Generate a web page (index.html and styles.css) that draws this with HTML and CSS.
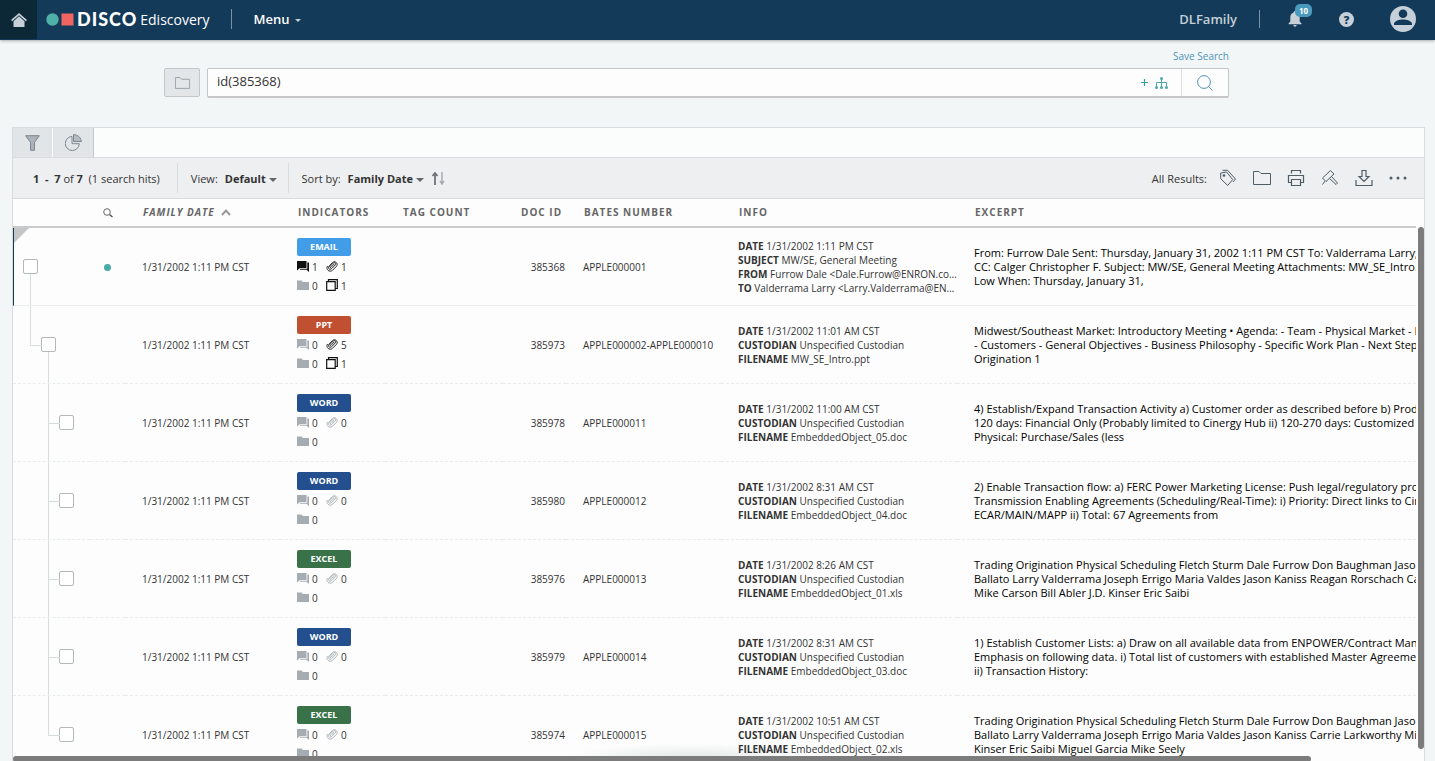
FILE: index.html
```html
<!DOCTYPE html>
<html lang="en">
<head>
    <meta charset="UTF-8">
    <meta name="viewport" content="width=device-width, initial-scale=1.0">
    <title>DISCO Ediscovery</title>
    <link rel="stylesheet" href="styles.css">
</head>
<body>
    <!-- Shared icons -->
    <svg class="sprite" aria-hidden="true">
        <symbol id="i-folder" viewBox="0 0 18 16"><path d="M.500 14.500V1.500H6L8 3.500H17.500V14.500Z" fill="none" stroke="currentColor"/></symbol>
        <symbol id="i-chat" viewBox="0 0 12 12"><path d="M0 1H9.500V8H3L0 10.500Z"/><path d="M10.300 2.500H12V12L9.500 9.800H3V8.700H10.300Z"/></symbol>
        <symbol id="i-clip" viewBox="0 0 12 12"><path d="M8.300 4L5 7.300C4.200 8.100 3.300 7.200 4 6.400L7.300 3C8.800 1.600 10.600 3.500 9.200 5L5.800 8.500C3.600 10.500 1.300 8.200 3.200 6L6.500 2.500C9 .200 12.800 3.600 10.500 6.300L6.500 10.300C3.500 12.800 -.500 9.500 1.300 6.300" fill="none" stroke="currentColor" stroke-width=".9" stroke-linecap="round"/></symbol>
        <symbol id="i-dir" viewBox="0 0 12 12"><path d="M0 1.500H4.500L6 3H12V11H0Z"/></symbol>
        <symbol id="i-copy" viewBox="0 0 12 12"><path d="M.700 2.700H9.200V11.300H.700Z M2.500 2.500V.700H11.300V9.500H9.500" fill="none" stroke="currentColor" stroke-width="1.200"/></symbol>
    </svg>

    <header class="topbar">
        <a class="home" href="#" aria-label="Home">
            <svg width="16" height="14" viewBox="0 0 16 14"><path d="M8 0L16 7L14.800 8.200L8 2.200L1.200 8.200L0 7Z"/><path d="M8 3.300L13.500 8.200V14H2.500V8.200Z"/></svg>
        </a>
        <a class="brand" href="#">
            <svg width="28" height="13" viewBox="0 0 28 13"><circle cx="6.500" cy="6.500" r="6.200" fill="#4fb0a8"/><rect x="15.500" y=".500" width="12" height="12" fill="#f0655f"/></svg>
            <strong>DISCO</strong>
            <span>Ediscovery</span>
        </a>
        <button class="menu-btn" type="button">Menu <i class="caret"></i></button>
        <div class="account">
            <span class="account-name">DLFamily</span>
            <button class="bell" type="button" aria-label="Notifications">
                <svg width="14" height="16" viewBox="0 0 14 16"><path d="M7 0C7.800 0 8.300 .600 8.300 1.400C10.600 2 11.700 4 11.700 6.300V10.500L13.500 12.500V13.300H.500V12.500L2.300 10.500V6.300C2.300 4 3.400 2 5.700 1.400C5.700 .600 6.200 0 7 0ZM5.400 14H8.600C8.600 16.300 5.400 16.300 5.400 14Z"/></svg>
                <span class="badge">10</span>
            </button>
            <button class="help" type="button" aria-label="Help">?</button>
            <button class="avatar" type="button" aria-label="Profile">
                <svg width="26" height="26" viewBox="0 0 26 26"><circle cx="13" cy="13" r="13"/><circle cx="13" cy="7.800" r="4.300" fill="#143a5a"/><path d="M4 19V17.800C4 15 9.500 13.500 13 13.500S22 15 22 17.800V19Z" fill="#143a5a"/></svg>
            </button>
        </div>
    </header>

    <form class="search">
        <a class="save" href="#">Save Search</a>
        <div class="search-row">
            <button class="folder-btn" type="button" aria-label="Folders"><svg width="15" height="14"><use href="#i-folder"/></svg></button>
            <div class="search-box">
                <input type="text" value="id(385368)" aria-label="Search">
                <button class="tool" type="button" aria-label="Search builder">
                    <svg width="27" height="12" viewBox="0 0 27 12"><path d="M0 5.500H7M3.500 2V9" fill="none" stroke="#3a9f9f" stroke-width="1.200"/><path d="M20.500 2V10M15.500 10V5.500H25.500V10" fill="none" stroke="#4aa9a9"/><g fill="#4aa9a9"><circle cx="20.500" cy="1.500" r="1.500"/><circle cx="15.500" cy="10.500" r="1.500"/><circle cx="20.500" cy="10.500" r="1.500"/><circle cx="25.500" cy="10.500" r="1.500"/></g></svg>
                </button>
                <button class="go" type="submit" aria-label="Run search">
                    <svg width="16" height="16" viewBox="0 0 16 16"><path d="M11.700 11.700L15.500 15.500" stroke="#4d94b8"/><circle cx="7" cy="7" r="6.400" fill="none" stroke="#4d94b8"/></svg>
                </button>
            </div>
        </div>
    </form>

    <main class="panel">
        <nav class="tabs">
            <button type="button" aria-label="Filters"><svg width="15" height="16" viewBox="0 0 15 16"><path d="M.700 .700H14.300L9.500 7.500V15.300H5.500V7.500Z" fill="#aab3b9" stroke="#7c888f"/></svg></button>
            <button type="button" aria-label="Charts"><svg width="17" height="17" viewBox="0 0 17 17"><path d="M7 2.500A7 7 0 1 0 14.300 9.700H7Z" fill="none" stroke="#7c888f"/><path d="M8.500 .600V7.500H16.300C16 3.500 13 .800 8.500 .600Z" fill="#b4bdc2" stroke="#7c888f"/></svg></button>
        </nav>

        <section class="toolbar">
            <p class="count"><b>1&nbsp; - &nbsp;7</b> of <b>7</b>&nbsp; (1 search hits)</p>
            <div class="option"><span>View:</span><button type="button">Default <i class="caret"></i></button></div>
            <div class="option"><span>Sort by:</span><button type="button">Family Date <i class="caret"></i></button>
                <button type="button" aria-label="Sort direction"><svg width="15" height="13" viewBox="0 0 15 13"><path d="M4 1V13M1.500 4L4 1L6.500 4" fill="none" stroke="#6f7478" stroke-width="1.800"/><path d="M11 0V12M9 9L11 12L13 9" fill="none" stroke="#a9adb0" stroke-width="1.500"/></svg></button>
            </div>
            <div class="actions">
                <span>All Results:</span>
                <button type="button" aria-label="Tag"><svg width="18" height="18" viewBox="0 0 18 18"><path d="M1.700 4L7.500 3L13.700 10.500L8.700 16.500L1.700 9.700ZM3.500 1.300H8.500L16.500 10L14 13" fill="none" stroke="currentColor"/><circle cx="5" cy="6.500" r="1.300" fill="currentColor"/></svg></button>
                <button type="button" aria-label="Folder"><svg width="18" height="16"><use href="#i-folder"/></svg></button>
                <button type="button" aria-label="Print"><svg width="18" height="18" viewBox="0 0 18 18"><path d="M4.500 4.500V1.500H13.500V4.500M4.500 13.500H1.500V6.500H16.500V13.500H13.500M4.500 10.500H13.500V16.500H4.500Z" fill="none" stroke="currentColor" stroke-width="1.200"/></svg></button>
                <button type="button" aria-label="Productions"><svg width="18" height="18" viewBox="0 0 18 18"><path d="M9.500 1.500L13 5L5 12.500L1.500 9ZM10.500 7.500L16.500 14L15 15.500L8.500 9.500M1.500 15.500L4 12" fill="none" stroke="currentColor"/></svg></button>
                <button type="button" aria-label="Download"><svg width="18" height="18" viewBox="0 0 18 18"><path d="M1 11V16.500H17V11M7 1.500H11V7.500H14L9 12.500L4 7.500H7Z" fill="none" stroke="currentColor" stroke-width="1.200"/></svg></button>
                <button type="button" aria-label="More"><svg width="18" height="18" viewBox="0 0 18 18" fill="currentColor"><circle cx="2" cy="9" r="1.500"/><circle cx="9" cy="9" r="1.500"/><circle cx="16" cy="9" r="1.500"/></svg></button>
            </div>
        </section>

        <div class="results">
            <table>
                <colgroup>
                    <col class="c-tree"><col class="c-hit"><col class="c-date"><col class="c-ind"><col class="c-tag"><col class="c-id"><col class="c-bates"><col class="c-info"><col>
                </colgroup>
                <thead>
                    <tr>
                        <th></th>
                        <th class="hit"><svg width="10" height="10" viewBox="0 0 10 10"><path d="M6.500 6.500L9.500 9" stroke="#555" stroke-width="1.500"/><circle cx="4" cy="4" r="3.300" fill="none" stroke="#666"/></svg></th>
                        <th class="sorted">Family Date <svg width="10" height="7" viewBox="0 0 10 7"><path d="M1 6L5 1.500L9 6" fill="none" stroke="#999" stroke-width="2"/></svg></th>
                        <th>Indicators</th>
                        <th>Tag Count</th>
                        <th>Doc ID</th>
                        <th>Bates Number</th>
                        <th>Info</th>
                        <th>Excerpt</th>
                    </tr>
                </thead>
                <tbody id="rows"></tbody>
            </table>
            <span class="bar-x"></span>
            <span class="bar-y"></span>
        </div>
    </main>
    <script src="script.js"></script>
</body>
</html>
```
FILE: styles.css
```css
* {
    box-sizing: border-box;
    margin: 0;
    padding: 0;
}

body {
    display: flex;
    flex-direction: column;
    height: 100vh;
    overflow: hidden;
    background-color: #f3f6f6;
    color: #333;
    font-family: "Open Sans", "Noto Sans", sans-serif;
    font-size: 11px;
}

button {
    border: none;
    background: none;
    color: inherit;
    font: inherit;
    cursor: pointer;
}

a {
    text-decoration: none;
}

svg {
    flex: none;
}

.sprite {
    display: none;
}

.caret {
    display: inline-block;
    border: 4px solid transparent;
    border-top-color: #666;
    border-bottom: none;
    vertical-align: middle;
}

/* Top bar */
.topbar {
    display: flex;
    align-items: center;
    flex: none;
    height: 40px;
    padding-bottom: 2px;
    background-color: #143a5a;
    color: #fff;
    box-shadow: 0 1px 3px rgba(0, 0, 0, 0.3);
}

.home {
    display: flex;
    align-items: center;
    justify-content: center;
    align-self: flex-start;
    width: 37px;
    height: 39px;
    background-color: #0c2736;
    fill: #c5d0d8;
}

.brand {
    display: flex;
    align-items: center;
    gap: 3px;
    height: 20px;
    margin-left: 9px;
    padding-right: 21px;
    border-right: 1px solid #7d93a5;
    color: #fff;
    font-size: 14px;
}

.brand strong {
    font-family: Lato, sans-serif;
    font-size: 18px;
    font-weight: 900;
    letter-spacing: 1px;
}

.menu-btn {
    margin-left: 22px;
    font-size: 13px;
    font-weight: 600;
}

.menu-btn .caret {
    margin-left: 2px;
    border-width: 3px;
    border-bottom: none;
    border-top-color: #c5d0d8;
}

.account {
    display: flex;
    align-items: center;
    margin-left: auto;
    padding-right: 19px;
    color: #c5d0d8;
    fill: #c5d0d8;
}

.account-name {
    padding-right: 22px;
    border-right: 1px solid #7d93a5;
    font-size: 13px;
    font-weight: 600;
}

.bell {
    position: relative;
    height: 16px;
    margin-left: 28px;
}

.badge {
    position: absolute;
    top: -7px;
    left: 7px;
    padding: 0 4px;
    border-radius: 5px;
    background-color: #4a9abd;
    color: #fff;
    font-size: 8px;
    font-weight: 700;
    line-height: 13px;
}

.help {
    width: 15px;
    height: 15px;
    margin-left: 37px;
    border-radius: 50%;
    background-color: #c5d0d8;
    color: #143a5a;
    font-size: 11px;
    font-weight: 800;
    line-height: 15px;
}

.avatar {
    height: 26px;
    margin-left: 36px;
}

/* Search */
.search {
    display: flex;
    flex-direction: column;
    flex: none;
    padding: 9px 206px 29px 164px;
}

.save {
    align-self: flex-end;
    margin-bottom: 4px;
    color: #4d94b8;
    font-size: 10px;
    line-height: 15px;
}

.search-row {
    display: flex;
    gap: 7px;
    height: 30px;
}

.folder-btn {
    display: flex;
    align-items: center;
    justify-content: center;
    width: 36px;
    height: 29px;
    border: 1px solid #c3c7ca;
    border-radius: 2px;
    background-color: #e3e6e8;
    color: #8b979e;
}

.search-box {
    display: flex;
    flex: 1;
    border: 1px solid #c3c7ca;
    border-bottom: 2px solid #c6c6c8;
    border-radius: 2px;
    background-color: #fdfdfd;
}

.search-box input {
    flex: 1;
    padding: 0 9px 4px;
    border: none;
    outline: none;
    background: none;
    color: #333;
    font-family: inherit;
    font-size: 13px;
}

.tool {
    display: flex;
    align-items: center;
    padding-right: 13px;
}

.go {
    display: flex;
    align-items: center;
    justify-content: center;
    width: 47px;
    border-left: 1px solid #dde0e2;
}

/* Results panel */
.panel {
    display: flex;
    flex: 1;
    flex-direction: column;
    min-height: 0;
    margin: 0 10px 0 12px;
    border: 1px solid #d9dcde;
    border-bottom: none;
    background-color: #fbfcfc;
}

.tabs {
    display: flex;
    gap: 1px;
    flex: none;
    height: 30px;
    border-bottom: 1px solid #d9dcde;
}

.tabs button {
    display: flex;
    align-items: center;
    justify-content: center;
    width: 39px;
    background-color: #e2e5e7;
}

.tabs button:last-child {
    width: 41px;
    border-right: 1px solid #c3c7ca;
}

.toolbar {
    display: flex;
    align-items: center;
    flex: none;
    height: 41px;
    padding: 0 17px 0 20px;
    border-bottom: 1px solid #d9dcde;
    background-color: #edeff0;
}

.count {
    padding-right: 17px;
}

.option {
    display: flex;
    align-items: center;
    gap: 7px;
    height: 30px;
    padding: 0 11px 0 13px;
    border-left: 1px solid #d9dcde;
}

.option button {
    font-weight: 700;
}

.option svg {
    display: block;
}

.actions {
    display: flex;
    align-items: center;
    gap: 16px;
    margin-left: auto;
    color: #4f5d66;
}

.actions span {
    margin-right: -4px;
    color: #333;
}

.actions button {
    display: flex;
}

.results {
    position: relative;
    flex: 1;
    min-height: 0;
    padding-right: 8px;
    overflow: hidden;
    background: radial-gradient(ellipse 130px 18px at 48% 100%, #dfe3e3, transparent) #fdfdfd;
}

table {
    width: 100%;
    border-collapse: separate;
    border-spacing: 0;
    table-layout: fixed;
}

.c-tree {
    width: 77px;
}

.c-hit {
    width: 35px;
}

.c-date {
    width: 155px;
}

.c-ind {
    width: 105px;
}

.c-tag {
    width: 118px;
}

.c-id {
    width: 63px;
}

.c-bates {
    width: 155px;
}

.c-info {
    width: 236px;
}

th {
    height: 29px;
    padding: 0 0 2px 18px;
    border-bottom: 2px solid #c9cbcc;
    color: #666;
    font-size: 10px;
    font-weight: 700;
    letter-spacing: 1px;
    text-align: left;
    text-transform: uppercase;
    white-space: nowrap;
}

.sorted {
    font-style: italic;
}

.sorted svg {
    margin-left: 3px;
}

td {
    height: 78px;
    padding-left: 17px;
    border-bottom: 1px dashed #e9ecec;
    font-size: 10px;
    line-height: 14px;
    overflow: hidden;
    white-space: nowrap;
}

.root td {
    border-bottom-style: solid;
}

.hit {
    padding-left: 0;
    text-align: center;
}

.hit svg {
    margin-top: 5px;
}

.dot {
    display: inline-block;
    width: 7px;
    height: 7px;
    border-radius: 50%;
    background-color: #4aa9a9;
    vertical-align: middle;
}

.doc-id {
    padding: 0 1px 0 0;
    text-align: right;
}

.info p {
    overflow: hidden;
    text-overflow: ellipsis;
}

.excerpt {
    color: #000;
    font-size: 11px;
}

/* Family tree */
.tree {
    position: relative;
    padding-left: 10px;
}

.tree input {
    display: block;
    width: 15px;
    height: 15px;
    border: 1px solid #b3b8bb;
    border-radius: 2px;
    background-color: #fff;
    appearance: none;
}

.root .tree {
    padding-left: 9px;
    border-left: 1px solid #143a5a;
}

.root .tree::before {
    content: "";
    position: absolute;
    top: 0;
    left: -1px;
    border: 8px solid #c4c6c7;
    border-right-color: transparent;
    border-bottom-color: transparent;
}

.root .tree::after,
.parent .tree::after {
    content: "";
    position: absolute;
    top: 46px;
    bottom: -1px;
    left: 16px;
    border-left: 1px solid #d5dddd;
}

.parent .tree {
    padding-left: 28px;
}

.parent .tree::after {
    left: 35px;
}

.parent .tree::before,
.child .tree::before {
    content: "";
    position: absolute;
    top: 0;
    left: 17px;
    width: 11px;
    height: 39px;
    border: solid #d5dddd;
    border-width: 0 0 1px 1px;
}

.child .tree {
    padding-left: 46px;
}

.child .tree::before {
    left: 35px;
}

.child:not(:last-child) .tree::after {
    content: "";
    position: absolute;
    top: 39px;
    bottom: -1px;
    left: 35px;
    border-left: 1px solid #d5dddd;
}

/* Indicators */
.type {
    width: 54px;
    height: 18px;
    border-radius: 2px;
    color: #fff;
    font-size: 9px;
    font-weight: 700;
    line-height: 18px;
    text-align: center;
}

.email {
    background-color: #429de8;
}

.ppt {
    background-color: #c15033;
}

.word {
    background-color: #234f8e;
}

.excel {
    background-color: #397249;
}

.marks {
    display: grid;
    grid-template-columns: 12px 11px 12px 11px;
    column-gap: 3px;
    align-items: center;
    margin-top: 2px;
    line-height: 19px;
}

.marks svg {
    margin-bottom: 2px;
    color: #a5adb2;
    fill: currentColor;
}

.marks svg.on {
    color: #111;
}

/* Overlay scrollbars */
.bar-x,
.bar-y {
    position: absolute;
    border-radius: 3px;
    background-color: #7c7c7c;
}

.bar-x {
    bottom: -1px;
    left: 0;
    width: 92%;
    height: 6px;
}

.bar-y {
    top: 28px;
    right: 0;
    bottom: 12px;
    width: 6px;
}
```
FILE: script.js
```js
const docs = [
    {
        level: 'root', type: 'Email', id: 385368, bates: 'APPLE000001', hit: true,
        marks: [1, 1, 0, 1],
        info: [['DATE', '1/31/2002 1:11 PM CST'], ['SUBJECT', 'MW/SE, General Meeting'], ['FROM', 'Furrow Dale <Dale.Furrow@ENRON.com>'], ['TO', 'Valderrama Larry <Larry.Valderrama@ENRON.com>']],
        excerpt: ['From: Furrow Dale Sent: Thursday, January 31, 2002 1:11 PM CST To: Valderrama Larry;', 'CC: Calger Christopher F. Subject: MW/SE, General Meeting Attachments: MW_SE_Intro.', 'Low When: Thursday, January 31,']
    },
    {
        level: 'parent', type: 'PPT', id: 385973, bates: 'APPLE000002-APPLE000010',
        marks: [0, 5, 0, 1],
        info: [['DATE', '1/31/2002 11:01 AM CST'], ['CUSTODIAN', 'Unspecified Custodian'], ['FILENAME', 'MW_SE_Intro.ppt']],
        excerpt: ['Midwest/Southeast Market: Introductory Meeting • Agenda: - Team - Physical Market - F', '- Customers - General Objectives - Business Philosophy - Specific Work Plan - Next Steps', 'Origination 1']
    },
    {
        level: 'child', type: 'Word', id: 385978, bates: 'APPLE000011',
        marks: [0, 0, 0],
        info: [['DATE', '1/31/2002 11:00 AM CST'], ['CUSTODIAN', 'Unspecified Custodian'], ['FILENAME', 'EmbeddedObject_05.doc']],
        excerpt: ['4) Establish/Expand Transaction Activity a) Customer order as described before b) Prod', '120 days: Financial Only (Probably limited to Cinergy Hub ii) 120-270 days: Customized P', 'Physical: Purchase/Sales (less']
    },
    {
        level: 'child', type: 'Word', id: 385980, bates: 'APPLE000012',
        marks: [0, 0, 0],
        info: [['DATE', '1/31/2002 8:31 AM CST'], ['CUSTODIAN', 'Unspecified Custodian'], ['FILENAME', 'EmbeddedObject_04.doc']],
        excerpt: ['2) Enable Transaction flow: a) FERC Power Marketing License: Push legal/regulatory pro', 'Transmission Enabling Agreements (Scheduling/Real-Time): i) Priority: Direct links to Cin', 'ECAR/MAIN/MAPP ii) Total: 67 Agreements from']
    },
    {
        level: 'child', type: 'Excel', id: 385976, bates: 'APPLE000013',
        marks: [0, 0, 0],
        info: [['DATE', '1/31/2002 8:26 AM CST'], ['CUSTODIAN', 'Unspecified Custodian'], ['FILENAME', 'EmbeddedObject_01.xls']],
        excerpt: ['Trading Origination Physical Scheduling Fletch Sturm Dale Furrow Don Baughman Jason', 'Ballato Larry Valderrama Joseph Errigo Maria Valdes Jason Kaniss Reagan Rorschach Ca', 'Mike Carson Bill Abler J.D. Kinser Eric Saibi']
    },
    {
        level: 'child', type: 'Word', id: 385979, bates: 'APPLE000014',
        marks: [0, 0, 0],
        info: [['DATE', '1/31/2002 8:31 AM CST'], ['CUSTODIAN', 'Unspecified Custodian'], ['FILENAME', 'EmbeddedObject_03.doc']],
        excerpt: ['1) Establish Customer Lists: a) Draw on all available data from ENPOWER/Contract Mana', 'Emphasis on following data. i) Total list of customers with established Master Agreemen', 'ii) Transaction History:']
    },
    {
        level: 'child', type: 'Excel', id: 385974, bates: 'APPLE000015',
        marks: [0, 0, 0],
        info: [['DATE', '1/31/2002 10:51 AM CST'], ['CUSTODIAN', 'Unspecified Custodian'], ['FILENAME', 'EmbeddedObject_02.xls']],
        excerpt: ['Trading Origination Physical Scheduling Fletch Sturm Dale Furrow Don Baughman Jason', 'Ballato Larry Valderrama Joseph Errigo Maria Valdes Jason Kaniss Carrie Larkworthy Mik', 'Kinser Eric Saibi Miguel Garcia Mike Seely']
    }
];

const icons = ['chat', 'clip', 'dir', 'copy'];
const escape = text => text.replace(/</g, '&lt;').replace(/>/g, '&gt;');

document.getElementById('rows').innerHTML = docs.map(doc => `
    <tr class="${doc.level}">
        <td class="tree"><input type="checkbox" aria-label="Select ${doc.id}"></td>
        <td class="hit">${doc.hit ? '<span class="dot"></span>' : ''}</td>
        <td>1/31/2002 1:11 PM CST</td>
        <td>
            <div class="type ${doc.type.toLowerCase()}">${doc.type.toUpperCase()}</div>
            <div class="marks">${doc.marks.map((n, i) => `<svg class="${n ? 'on' : ''}" width="12" height="12"><use href="#i-${icons[i]}"/></svg><span>${n}</span>`).join('')}</div>
        </td>
        <td></td>
        <td class="doc-id">${doc.id}</td>
        <td>${doc.bates}</td>
        <td class="info">${doc.info.map(([label, value]) => `<p><b>${label}</b> ${escape(value)}</p>`).join('')}</td>
        <td class="excerpt">${doc.excerpt.join('<br>')}</td>
    </tr>`).join('');
```
